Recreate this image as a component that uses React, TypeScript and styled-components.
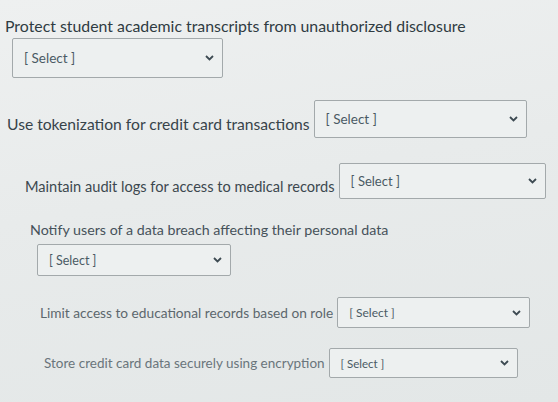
import styled, { createGlobalStyle } from "styled-components";

const GlobalStyle = createGlobalStyle`
  html, body {
    margin: 0;
    padding: 0;
  }
  body {
    width: 558px;
    height: 402px;
    overflow: hidden;
    background: #e7eaea;
    font-family: Lato, "Open Sans", sans-serif;
  }
`;

const Page = styled.div`
  width: 558px;
  height: 402px;
  display: flex;
  flex-direction: column;
  background: linear-gradient(170deg, #eef0f0 0%, #e8ebeb 45%, #e3e7e7 100%);
`;

const Row = styled.div<{ $top: number; $indent: number; $inline?: boolean }>`
  display: flex;
  flex-direction: ${(p) => (p.$inline ? "row" : "column")};
  align-items: ${(p) => (p.$inline ? "center" : "flex-start")};
  gap: ${(p) => (p.$inline ? "4px" : "0")};
  margin-top: ${(p) => p.$top}px;
  padding-left: ${(p) => p.$indent}px;
`;

const Label = styled.span<{ $size: number; $color: string; $drop?: number }>`
  font-size: ${(p) => p.$size}px;
  line-height: ${(p) => Math.round(p.$size + 4)}px;
  color: ${(p) => p.$color};
  white-space: nowrap;
  padding-top: ${(p) => p.$drop ?? 0}px;
`;

const SelectBox = styled.div<{ $w: number; $h: number; $size: number; $offset?: number }>`
  box-sizing: border-box;
  width: ${(p) => p.$w}px;
  height: ${(p) => p.$h}px;
  margin-top: ${(p) => p.$offset ?? 0}px;
  margin-left: ${(p) => (p.$offset !== undefined ? 7 : 0)}px;
  display: flex;
  align-items: center;
  justify-content: space-between;
  padding: 0 8px 0 11px;
  border: 1px solid #a3a9ab;
  border-radius: 2px;
  background: #edf0f0;
  font-size: ${(p) => p.$size}px;
  color: #4a5a64;
`;

const Chevron = () => (
  <svg width="9" height="6" viewBox="0 0 9 6">
    <path d="M1 1l3.5 3.5L8 1" fill="none" stroke="#3d4a52" strokeWidth="1.8" />
  </svg>
);

function Select(props: { w: number; h: number; size: number; offset?: number }) {
  return (
    <SelectBox $w={props.w} $h={props.h} $size={props.size} $offset={props.offset}>
      <span>[ Select ]</span>
      <Chevron />
    </SelectBox>
  );
}

export default function App() {
  return (
    <>
      <GlobalStyle />
      <Page>
        <Row $top={16} $indent={5}>
          <Label $size={15.85} $color="#2f3b42">
            Protect student academic transcripts from unauthorized disclosure
          </Label>
          <Select w={211} h={40} size={13.5} offset={2} />
        </Row>

        <Row $top={22} $indent={7} $inline>
          <Label $size={15.65} $color="#37434a" $drop={10}>
            Use tokenization for credit card transactions
          </Label>
          <Select w={213} h={38} size={13.5} />
        </Row>

        <Row $top={25} $indent={25} $inline>
          <Label $size={14.6} $color="#3c484f" $drop={10}>
            Maintain audit logs for access to medical records
          </Label>
          <Select w={207} h={36} size={13} />
        </Row>

        <Row $top={22} $indent={30}>
          <Label $size={14.25} $color="#46525a">
            Notify users of a data breach affecting their personal data
          </Label>
          <Select w={194} h={32} size={12.5} offset={5} />
        </Row>

        <Row $top={21} $indent={40} $inline>
          <Label $size={13.7} $color="#5c676d">
            Limit access to educational records based on role
          </Label>
          <Select w={193} h={31} size={12} />
        </Row>

        <Row $top={20} $indent={44} $inline>
          <Label $size={13.5} $color="#6a757b">
            Store credit card data securely using encryption
          </Label>
          <Select w={189} h={30} size={11.5} />
        </Row>
      </Page>
    </>
  );
}
